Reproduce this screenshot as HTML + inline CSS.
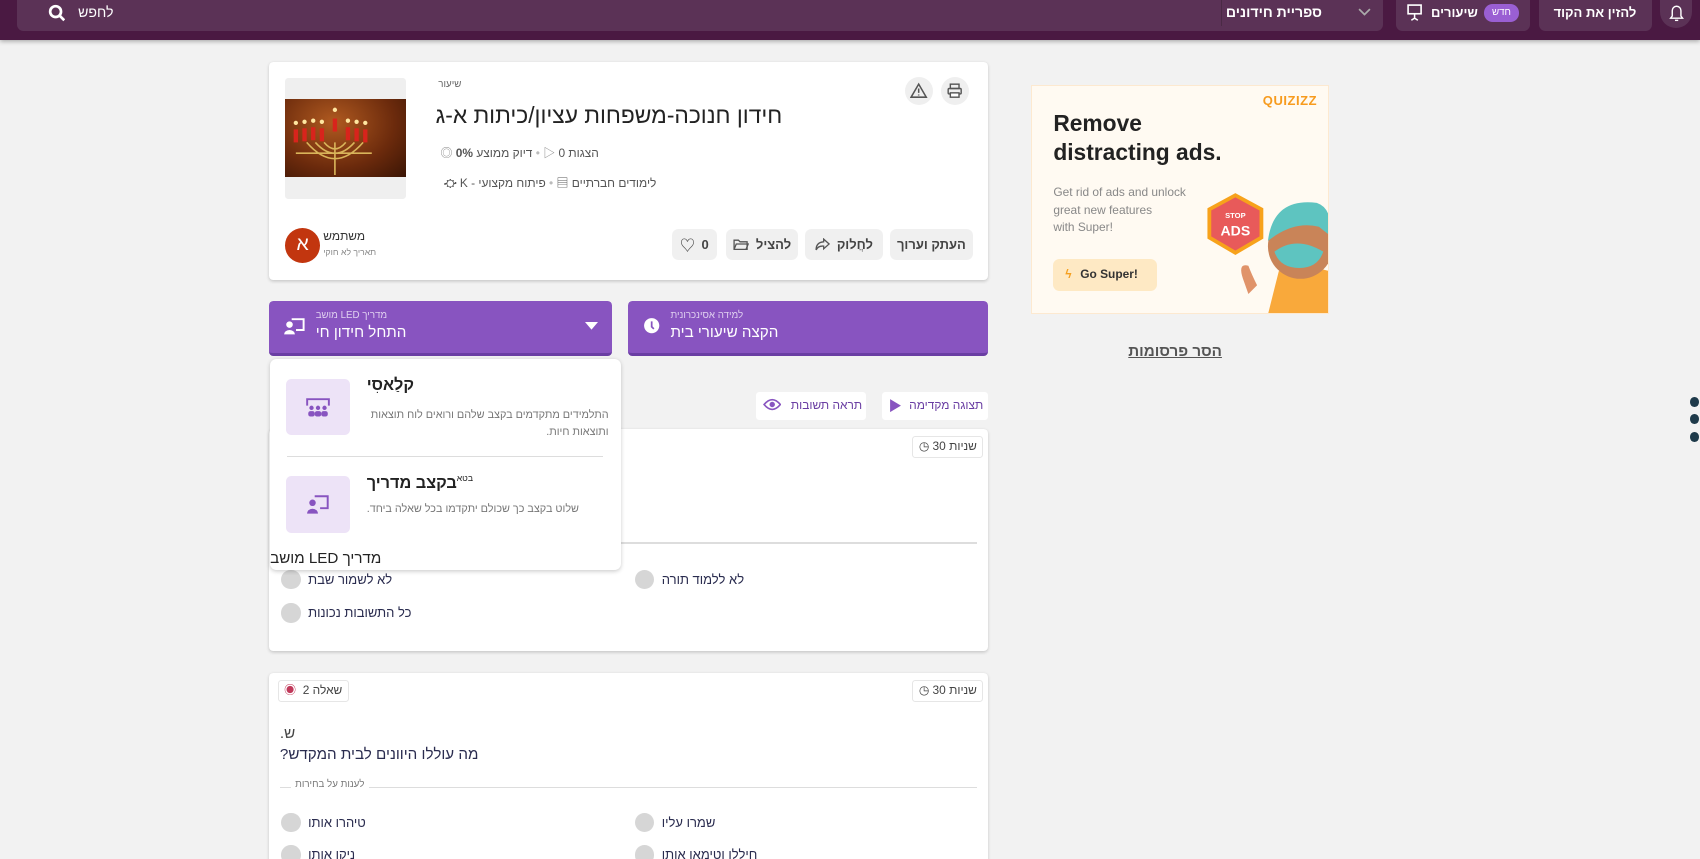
<!DOCTYPE html>
<html><head><meta charset="utf-8"><style>
html,body{margin:0;padding:0;overflow:hidden;background:#f2f2f2}
body{width:1700px;height:859px;font-family:"Liberation Sans","Noto Sans CJK SC",sans-serif}
#w{position:relative;width:1567px;height:792px;zoom:1.0849;background:#f2f2f2}
.a{position:absolute}
.r{direction:rtl}
.card{position:absolute;background:#fff;border-radius:4px;box-shadow:0 1px 3px rgba(0,0,0,.18)}
.hb{position:absolute;background:#5b3256;border-radius:0 0 6px 6px;color:#fff;font-weight:bold;font-size:13px}
.gbtn{position:absolute;background:#f0f0f0;border-radius:6px;height:29px;top:211px;font-size:12px;font-weight:bold;color:#444;display:flex;align-items:center;justify-content:center;gap:6px}
.pb{position:absolute;background:#8854c0;border-radius:4px;border-bottom:3px solid #6a3ea3;height:48px;top:277px;color:#fff}
.opt{position:absolute;width:18px;height:18px;border-radius:50%;background:#d6d6d6}
.ot{position:absolute;font-size:12px;color:#2a2c4f;direction:rtl}
.tag{position:absolute;border:1px solid #e6e6e6;border-radius:3px;font-size:11px;color:#444;height:18px;line-height:18px;padding:0 5px;direction:rtl}
</style></head><body><div id="w">
<!-- header -->
<div class="a" style="left:0;top:0;width:1567px;height:37px;background:#4a1942;box-shadow:0 2px 4px rgba(0,0,0,.3)"></div>
<div class="hb" style="left:16px;top:0;width:1259px;height:29px"></div>
<div class="a" style="left:1125px;top:0;width:1px;height:24px;background:#4a2a45"></div>
<svg class="a" style="left:44px;top:4px" width="16" height="16"><circle cx="7" cy="7" r="5" stroke="#fff" stroke-width="2.5" fill="none"/><path d="M11 11l4 4" stroke="#fff" stroke-width="2.5"/></svg>
<div class="a r" style="left:72px;top:4px;color:#fff;font-size:13px">לחפש</div>
<div class="a r" style="left:1130px;top:4px;color:#fff;font-size:13px;font-weight:bold">ספריית חידונים</div>
<svg class="a" style="left:1252px;top:7px" width="12" height="8"><path d="M1 1l5 5 5-5" stroke="#aaa" stroke-width="1.6" fill="none"/></svg>
<div class="hb" style="left:1287px;top:0;width:123px;height:29px"></div>
<svg class="a" style="left:1297px;top:4px" width="14" height="16"><rect x="1" y="1" width="12" height="8" stroke="#fff" stroke-width="1.5" fill="none"/><path d="M7 9v4M4 15l3-2 3 2" stroke="#fff" stroke-width="1.4" fill="none"/></svg>
<div class="a r" style="left:1319px;top:5px;color:#fff;font-size:12px;font-weight:bold">שיעורים</div>
<div class="a" style="left:1368px;top:4px;width:32px;height:16px;border-radius:8px;background:#9a5fd3;color:#fff;font-size:9px;text-align:center;line-height:16px">חדש</div>
<div class="hb" style="left:1419px;top:0;width:104px;height:29px"></div>
<div class="a r" style="left:1432px;top:5px;color:#fff;font-size:12px;font-weight:bold">להזין את הקוד</div>
<div class="hb" style="left:1530px;top:0;width:30px;height:26px;border-radius:0 0 15px 15px"></div>
<svg class="a" style="left:1538px;top:3px" width="14" height="18"><path d="M3 12V7a4 4 0 018 0v5l1.5 2h-11z" stroke="#fff" stroke-width="1.3" fill="none"/><path d="M5.5 16h3" stroke="#fff" stroke-width="1.3"/></svg>

<!-- card 1 -->
<div class="card" style="left:248px;top:57px;width:663px;height:201px"></div>
<div class="a" style="left:263px;top:72px;width:111px;height:111px;background:#efefef;border-radius:3px"></div>
<div class="a" style="left:263px;top:91px;width:111px;height:72px;background:radial-gradient(ellipse at 40% 30%,#b05a20,#6b2a0c 60%,#3a1505)"></div>
<svg class="a" style="left:263px;top:91px" width="111" height="72"><g stroke="#d9b45a" stroke-width="1.5" fill="none"><path d="M46 40v30M20 40q26 30 52 0M28 40q18 20 36 0M36 40q10 12 20 0M10 50h70"/></g><g fill="#d8241c"><rect x="8" y="28" width="4" height="12"/><rect x="16" y="27" width="4" height="12"/><rect x="24" y="26" width="4" height="12"/><rect x="32" y="27" width="4" height="12"/><rect x="44" y="18" width="4" height="12"/><rect x="56" y="26" width="4" height="12"/><rect x="64" y="27" width="4" height="12"/><rect x="72" y="28" width="4" height="12"/></g><g fill="#ffe6a0"><circle cx="10" cy="22" r="2"/><circle cx="18" cy="21" r="2"/><circle cx="26" cy="20" r="2"/><circle cx="34" cy="21" r="2"/><circle cx="46" cy="10" r="2"/><circle cx="58" cy="20" r="2"/><circle cx="66" cy="21" r="2"/><circle cx="74" cy="22" r="2"/></g></svg>
<div class="a r" style="left:404px;top:73px;width:30px;font-size:9px;color:#666;text-align:left">שיעור</div>
<div class="a r" style="right:846px;top:94px;font-size:21px;color:#222;white-space:nowrap">חידון חנוכה-משפחות עציון/כיתות א-ג</div>
<div class="a r" style="right:1015px;top:133px;font-size:11px;color:#555;white-space:nowrap">הצגות 0 <span style="color:#888">▷</span> <span style="color:#bbb">•</span> דיוק ממוצע <b>0%</b> <span style="color:#888">◎</span></div>
<div class="a r" style="right:962px;top:160px;font-size:11px;color:#555;white-space:nowrap">לימודים חברתיים ▤ <span style="color:#bbb">•</span> פיתוח מקצועי - K ⛮</div>
<div class="a" style="left:834px;top:71px;width:26px;height:26px;border-radius:50%;background:#efefef"></div>
<svg class="a" style="left:839px;top:76px" width="16" height="16"><path d="M8 2L15 14H1z" stroke="#555" stroke-width="1.4" fill="none"/><path d="M8 6v4M8 11.5v1" stroke="#555" stroke-width="1.4"/></svg>
<div class="a" style="left:867px;top:71px;width:26px;height:26px;border-radius:50%;background:#efefef"></div>
<svg class="a" style="left:872px;top:76px" width="16" height="16"><rect x="4" y="2" width="8" height="4" stroke="#555" fill="none" stroke-width="1.3"/><rect x="2" y="6" width="12" height="5" rx="1" stroke="#555" fill="none" stroke-width="1.3"/><rect x="4" y="10" width="8" height="4" stroke="#555" fill="#fff" stroke-width="1.3"/></svg>
<div class="a" style="left:263px;top:210px;width:32px;height:32px;border-radius:50%;background:#c2360f;color:#fff;font-size:18px;text-align:center;line-height:31px">א</div>
<div class="a r" style="left:298px;top:211px;font-size:11px;color:#333">משתמש</div>
<div class="a r" style="left:298px;top:228px;font-size:8px;color:#888">תאריך לא חוקי</div>
<div class="gbtn" style="left:619px;width:42px"><span style="font-size:14px;color:#555">♡</span>0</div>
<div class="gbtn" style="left:669px;width:67px"><svg width="15" height="12"><path d="M1 2h4l1.5 1.5H13v7H1z" stroke="#555" stroke-width="1.2" fill="none"/><path d="M1 10.5l2-5h11l-2 5" stroke="#555" stroke-width="1.2" fill="none"/></svg><span class="r">להציל</span></div>
<div class="gbtn" style="left:742px;width:72px"><svg width="14" height="12"><path d="M8 1l5 4.5-5 4.5V7.5Q3 7 1 11q0-7 7-7.5z" stroke="#555" stroke-width="1.2" fill="none"/></svg><span class="r">לחֲלוק</span></div>
<div class="gbtn" style="left:820px;width:77px"><span class="r">העתק וערוך</span></div>

<!-- purple buttons -->
<div class="pb" style="left:248px;width:316px"></div>
<svg class="a" style="left:261px;top:292px" width="20" height="18"><circle cx="6" cy="7" r="3" fill="#fff"/><path d="M1 16a5 4 0 0110 0z" fill="#fff"/><path d="M8 2h11v10h-7" stroke="#fff" stroke-width="1.8" fill="none"/></svg>
<div class="a r" style="left:291px;top:286px;font-size:9px;color:#e0d0f0;white-space:nowrap">מדריך LED מושב</div>
<div class="a r" style="left:291px;top:299px;font-size:14px;color:#fff;white-space:nowrap">התחל חידון חי</div>
<svg class="a" style="left:539px;top:297px" width="12" height="7"><path d="M0 0h12L6 7z" fill="#fff"/></svg>
<div class="pb" style="left:579px;width:332px"></div>
<svg class="a" style="left:593px;top:292px" width="16" height="16"><circle cx="8" cy="8" r="7" fill="#fff"/><path d="M8 4v5l2 2" stroke="#8854c0" stroke-width="1.6" fill="none"/></svg>
<div class="a r" style="left:618px;top:286px;font-size:9px;color:#e0d0f0;white-space:nowrap">למידה אסינכרונית</div>
<div class="a r" style="left:618px;top:299px;font-size:14px;color:#fff;white-space:nowrap">הקצה שיעורי בית</div>

<!-- preview buttons -->
<div class="a" style="left:813px;top:361px;width:98px;height:26px;background:#fff;border-radius:3px"></div>
<svg class="a" style="left:819px;top:367px" width="12" height="14"><path d="M1 1l10 6-10 6z" fill="#8854c0"/></svg>
<div class="a r" style="left:838px;top:367px;font-size:11px;color:#6a3ea3">תצוגה מקדימה</div>
<div class="a" style="left:697px;top:361px;width:101px;height:26px;background:#fff;border-radius:3px"></div>
<svg class="a" style="left:703px;top:367px" width="17" height="12"><path d="M1 6q7.5-9 15 0q-7.5 9-15 0z" stroke="#8854c0" stroke-width="1.5" fill="none"/><circle cx="8.5" cy="6" r="2.5" fill="#8854c0"/></svg>
<div class="a r" style="left:729px;top:367px;font-size:11px;color:#6a3ea3">תראה תשובות</div>

<!-- question card 1 -->
<div class="card" style="left:248px;top:395px;width:663px;height:205px"></div>
<div class="tag" style="left:841px;top:402px">שניות 30 ◷</div>
<div class="a" style="left:265px;top:500px;width:636px;height:1px;background:#ddd"></div>
<div class="opt" style="left:585px;top:525px"></div><div class="ot" style="left:610px;top:527px">לא ללמוד תורה</div>
<div class="opt" style="left:259px;top:525px"></div><div class="ot" style="left:284px;top:527px">לא לשמור שבת</div>
<div class="opt" style="left:259px;top:556px"></div><div class="ot" style="left:284px;top:558px">כל התשובות נכונות</div>

<!-- question card 2 -->
<div class="card" style="left:248px;top:620px;width:663px;height:200px"></div>
<div class="tag" style="left:841px;top:627px">שניות 30 ◷</div>
<div class="tag" style="left:256px;top:627px">שאלה 2 &nbsp;<span style="color:#c0395a">◉</span></div>
<div class="ot" style="left:258px;top:668px;font-size:14px;color:#444">ש.</div>
<div class="ot" style="left:258px;top:688px;font-size:14px;color:#2a2c4f">מה עוללו היוונים לבית המקדש?</div>
<div class="a" style="left:258px;top:725px;width:643px;height:1px;background:#ddd"></div>
<div class="ot" style="left:268px;top:718px;font-size:9px;color:#777;background:#fff;padding:0 4px">לענות על בחירות</div>
<div class="opt" style="left:585px;top:749px"></div><div class="ot" style="left:610px;top:751px">שמרו עליו</div>
<div class="opt" style="left:259px;top:749px"></div><div class="ot" style="left:284px;top:751px">טיהרו אותו</div>
<div class="opt" style="left:585px;top:779px"></div><div class="ot" style="left:610px;top:781px">חיללו וטימאו אותו</div>
<div class="opt" style="left:259px;top:779px"></div><div class="ot" style="left:284px;top:781px">ניקו אותו</div>

<!-- dropdown -->
<div class="a" style="left:249px;top:331px;width:323px;height:194px;background:#fff;border-radius:6px;box-shadow:0 1px 4px rgba(0,0,0,.2)"></div>
<div class="a" style="left:264px;top:349px;width:59px;height:52px;background:#ede3f7;border-radius:5px"></div>
<svg class="a" style="left:281px;top:366px" width="24" height="20"><path d="M2 8V2h20v6" stroke="#8854c0" stroke-width="1.8" fill="none"/><g fill="#8854c0"><circle cx="6" cy="10" r="2"/><circle cx="12" cy="10" r="2"/><circle cx="18" cy="10" r="2"/><rect x="3" y="13" width="6" height="5" rx="2"/><rect x="9" y="13" width="6" height="5" rx="2"/><rect x="15" y="13" width="6" height="5" rx="2"/></g></svg>
<div class="a r" style="left:338px;top:347px;font-size:15px;font-weight:bold;color:#222">קלַאסִי</div>
<div class="a r" style="left:338px;top:375px;width:223px;font-size:10px;line-height:16px;color:#777;text-align:right">התלמידים מתקדמים בקצב שלהם ורואים לוח תוצאות ותוצאות חיות.</div>
<div class="a" style="left:265px;top:420px;width:291px;height:1px;background:#ddd"></div>
<div class="a" style="left:264px;top:439px;width:59px;height:52px;background:#ede3f7;border-radius:5px"></div>
<svg class="a" style="left:282px;top:454px" width="22" height="20"><circle cx="6" cy="9" r="3" fill="#8854c0"/><path d="M1 19a5 4.5 0 0110 0z" fill="#8854c0"/><path d="M8 3h12v11h-7" stroke="#8854c0" stroke-width="1.8" fill="none"/></svg>
<div class="a" style="left:338px;top:437px;font-size:15px;font-weight:bold;color:#222;white-space:nowrap">בקצב מדריך</div>
<div class="a" style="left:421px;top:436px;font-size:8px;color:#222">בטא</div>
<div class="a r" style="left:338px;top:464px;font-size:10px;color:#777;white-space:nowrap">שלוט בקצב כך שכולם יתקדמו בכל שאלה ביחד.</div>
<div class="a r" style="left:249px;top:507px;font-size:14px;color:#222;white-space:nowrap">מדריך LED מושב</div>

<!-- ad -->
<div class="a" style="left:950px;top:78px;width:275px;height:211px;background:#fffaf2;border:1px solid #fde9d0;box-sizing:border-box;overflow:hidden">
<div class="a" style="right:10px;top:7px;color:#f79b1e;font-weight:bold;font-size:12px;letter-spacing:.5px">QUIZIZZ</div>
<div class="a" style="left:20px;top:22px;font-size:21px;font-weight:bold;color:#222;line-height:26px">Remove<br>distracting ads.</div>
<div class="a" style="left:20px;top:91px;font-size:11px;color:#888;line-height:16px">Get rid of ads and unlock<br>great new features<br>with Super!</div>
<div class="a" style="left:20px;top:160px;width:96px;height:29px;background:#fee9c4;border-radius:6px;font-size:11px;font-weight:bold;color:#333;line-height:29px"><span style="color:#f5a020;margin:0 8px 0 11px">ϟ</span>Go Super!</div>
<svg class="a" style="left:160px;top:98px" width="115" height="113"><polygon points="28,3 52,16 52,42 28,56 4,42 4,16" fill="#e85a5a" stroke="#f7a21b" stroke-width="3.5"/><text x="28" y="24" font-size="7" fill="#fff" text-anchor="middle" font-family="Liberation Sans" font-weight="bold">STOP</text><text x="28" y="40" font-size="13" fill="#fff" text-anchor="middle" font-family="Liberation Sans" font-weight="bold">ADS</text><path d="M58 113l10-40q20-8 47 0v40z" fill="#f9a93b"/><circle cx="88" cy="50" r="30" fill="#c98458"/><path d="M58 45q5-40 45-35q15 5 12 30l-10-8q-20-5-40 8z" fill="#5ec4c0"/><path d="M64 55q20-15 45 0q-5 15-22 15q-18 0-23-15z" fill="#5ec4c0"/><path d="M35 80q-5-15 5-12q3 8 8 18l-8 8z" fill="#e0936a"/></svg>
</div>
<div class="a r" style="left:1040px;top:316px;font-size:14px;font-weight:bold;color:#555;text-decoration:underline">הסר פרסומות</div>
<div class="a" style="left:1558px;top:366px;width:8px;height:9px;border-radius:50%;background:#1e3a4a"></div>
<div class="a" style="left:1558px;top:382px;width:8px;height:9px;border-radius:50%;background:#1e3a4a"></div>
<div class="a" style="left:1558px;top:398px;width:8px;height:9px;border-radius:50%;background:#1e3a4a"></div>
</div></body></html>
